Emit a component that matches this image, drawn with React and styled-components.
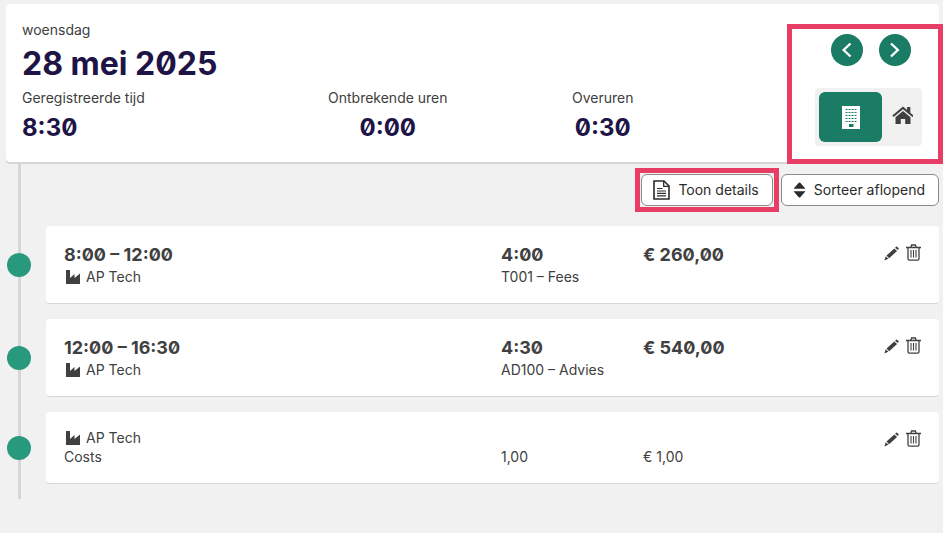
import { useState } from "react";
import styled, { createGlobalStyle, css } from "styled-components";

const GlobalStyle = createGlobalStyle`
  * {
    box-sizing: border-box;
  }

  body {
    margin: 0;
    background: #f1f1f1;
    color: #404040;
    font-family: Inter, "Liberation Sans", sans-serif;
    font-size: 14px;
    line-height: 20px;
  }

  button {
    font: inherit;
    color: inherit;
    cursor: pointer;
  }
`;

const Page = styled.div`
  padding: 4px 4px 32px 6px;
`;

const highlight = css`
  position: relative;

  &::after {
    content: "";
    position: absolute;
    inset: ${(props) => props.$inset};
    border: 5px solid #e83e66;
    pointer-events: none;
  }
`;

const Header = styled.header`
  display: flex;
  padding: 16px 17px 14px 16px;
  background: #fff;
  border-radius: 4px;
  box-shadow: 0 2px 0 #d6d6d6;
`;

const Summary = styled.div`
  flex: 1;
`;

const Title = styled.h1`
  margin: 0;
  color: #1e1446;
  font-size: 32px;
  font-weight: 700;
  line-height: 48px;
  font-feature-settings: "zero";
`;

const Totals = styled.dl`
  display: grid;
  grid-template-columns: 306fr 244fr 243fr;
  margin: 0;
`;

const Total = styled.div`
  justify-self: start;
  text-align: ${(props) => (props.$center ? "center" : "left")};
`;

const Value = styled.dd`
  margin: 0;
  color: #1e1446;
  font-size: 24px;
  font-weight: 700;
  line-height: 40px;
  font-feature-settings: "zero";
`;

const Controls = styled.div`
  ${highlight}
  display: flex;
  flex-direction: column;
  align-items: center;
  gap: 22px;
  padding-top: 14px;
`;

const DayNav = styled.nav`
  display: flex;
  gap: 16px;
  padding-left: 5px;
`;

const RoundButton = styled.button`
  display: grid;
  place-items: center;
  width: 32px;
  height: 32px;
  padding: 0;
  border: 0;
  border-radius: 50%;
  background: #1a7c64;
  color: #fff;
`;

const Places = styled.div`
  display: flex;
  padding: 4px 0 4px 4px;
  border-radius: 4px;
  background: #f1f1f1;
`;

const PlaceButton = styled.button`
  display: grid;
  place-items: center;
  width: ${(props) => (props.$active ? 63 : 40)}px;
  height: 50px;
  padding: 0;
  border: 0;
  border-radius: 6px;
  background: ${(props) => (props.$active ? "#1a7c64" : "transparent")};
  color: ${(props) => (props.$active ? "#fff" : "#404040")};
`;

const Toolbar = styled.div`
  display: flex;
  justify-content: flex-end;
  gap: 8px;
  padding: 12px 0 20px;
`;

const Highlighted = styled.div`
  ${highlight}
`;

const ToolButton = styled.button`
  display: flex;
  align-items: center;
  gap: 8px;
  height: 32px;
  padding: 0 13px 0 11px;
  border: 1px solid #8a8a8a;
  border-radius: 6px;
  background: #fff;
  color: #2b2b2b;
`;

const Timeline = styled.main`
  padding-bottom: 15px;
  background: linear-gradient(#d6d6d6, #d6d6d6) 12px 0 / 3px 100% no-repeat;
`;

const Entries = styled.ul`
  display: flex;
  flex-direction: column;
  gap: 15px;
  margin: 0;
  padding: 0;
  list-style: none;
`;

const Entry = styled.li`
  display: flex;
  align-items: center;
  gap: 15px;
  padding-left: 1px;
`;

const Dot = styled.span`
  width: 24px;
  height: 24px;
  border-radius: 50%;
  background: #28997d;
`;

const Card = styled.article`
  flex: 1;
  display: grid;
  grid-template-columns: 437fr 142fr 241fr 37px;
  align-items: ${(props) => (props.$cost ? "end" : "start")};
  padding: ${(props) => (props.$cost ? "16px 18px 17px" : "16px 18px")};
  border-bottom: 1px solid #d6d6d6;
  border-radius: 4px;
  background: #fff;
`;

const Strong = styled.div`
  font-size: 18px;
  font-weight: 700;
  line-height: 25px;
  font-feature-settings: "zero";
`;

const Line = styled.div`
  display: flex;
  align-items: center;
  gap: 5px;
  line-height: ${(props) => (props.$tight ? 19 : 20)}px;
`;

const Actions = styled.div`
  display: flex;
  align-self: start;
  justify-content: space-between;
  padding-top: 2px;
`;

const IconButton = styled.button`
  display: flex;
  align-items: flex-start;
  padding: 0;
  border: 0;
  background: none;
`;

const Chevron = ({ next }) => (
  <svg width="16" height="16" viewBox="0 0 16 16" fill="none" stroke="currentColor" strokeWidth="2.4">
    <path d={next ? "M4 1.5L10.8 8L4 14.5" : "M11.5 1.5L4.7 8L11.5 14.5"} />
  </svg>
);

const OfficeIcon = () => (
  <svg width="18" height="23" viewBox="0 0 18 23">
    <path d="M0 0h18v23H0z" fill="currentColor" />
    <g fill="#1a7c64">
      {[4, 7, 10, 13, 16].map((y) =>
        [3.5, 6.5, 9.5, 12.5].map((x) => <rect key={`${x}-${y}`} x={x} y={y - 1} width="2" height="1" />)
      )}
      <path d="M7 18h4.5v3H7z" />
    </g>
  </svg>
);

const HomeIcon = () => (
  <svg width="22" height="22" viewBox="-1 0 22 22" fill="currentColor">
    <path d="M11 .5L.3 9.6l1.3 1.5L11 3.3l9.4 7.8 1.3-1.5-3.4-2.9V1h-3.2v3z" />
    <path d="M11 5L3.5 11.2V18h5.3v-5h4.4v5h5.3v-6.8z" />
  </svg>
);

const DocumentIcon = () => (
  <svg width="17" height="20" viewBox="0 0 17 20" fill="none" stroke="currentColor" strokeWidth="1.6">
    <path d="M1 1h10l5 5v13H1z" />
    <path d="M10.7 1v5.3H16" strokeWidth="1.3" />
    <path d="M4 8.5h5.5M4 11h9M4 13.4h9M4 15.8h9" strokeWidth="1.2" />
  </svg>
);

const SortIcon = () => (
  <svg width="13" height="16" viewBox="0 0 13 16" fill="currentColor">
    <path d="M.5 6.8L5.5 1q1-1 2 0l5 5.8zM.5 9.2h12l-5 5.8q-1 1-2 0z" />
  </svg>
);

const FactoryIcon = () => (
  <svg width="17" height="14" viewBox="0 0 17 14" fill="currentColor">
    <path d="M2 0h4v8l4.5-4v4L16 3.5V14H2z" />
  </svg>
);

const PencilIcon = () => (
  <svg width="15" height="20" viewBox="0 1 15 20" fill="currentColor">
    <path d="M10.3 5.4l2.8 2.7-8 7.1-2.6-2.6zM11.1 4.7l1-.9q.7-.5 1.3.1l1.1 1.2q.5.7-.1 1.2l-.6.6zM1.8 13.2l2.6 2.6L.3 17.5z" />
  </svg>
);

const TrashIcon = () => (
  <svg width="15" height="17" viewBox="0 0 15 17" fill="none" stroke="currentColor" strokeWidth="1.3">
    <path d="M0 3.5h15M4.8 3.3L5.6 1h3.8l.8 2.3M2 3.7v11.1q0 1.4 1.4 1.4h8.2q1.4 0 1.4-1.4V3.7" />
    <path d="M5 6v7.5M7.5 6v7.5M10 6v7.5" strokeWidth="1.1" />
  </svg>
);

const totals = [
  { label: "Geregistreerde tijd", value: "8:30" },
  { label: "Ontbrekende uren", value: "0:00" },
  { label: "Overuren", value: "0:30" },
];

const entries = [
  { time: "8:00 – 12:00", client: "AP Tech", amount: "4:00", task: "T001 – Fees", price: "€ 260,00" },
  { time: "12:00 – 16:30", client: "AP Tech", amount: "4:30", task: "AD100 – Advies", price: "€ 540,00" },
  { client: "AP Tech", kind: "Costs", amount: "1,00", price: "€ 1,00" },
];

const EntryRow = ({ entry }) => {
  const cost = !entry.time;
  const Amount = cost ? Line : Strong;

  return (
    <Entry>
      <Dot />
      <Card $cost={cost}>
        <div>
          {!cost && <Strong>{entry.time}</Strong>}
          <Line $tight={cost}>
            <FactoryIcon />
            {entry.client}
          </Line>
          {cost && <Line $tight>{entry.kind}</Line>}
        </div>
        <div>
          <Amount $tight={cost}>{entry.amount}</Amount>
          {entry.task && <Line>{entry.task}</Line>}
        </div>
        <Amount $tight={cost}>{entry.price}</Amount>
        <Actions>
          <IconButton aria-label="Bewerken">
            <PencilIcon />
          </IconButton>
          <IconButton aria-label="Verwijderen">
            <TrashIcon />
          </IconButton>
        </Actions>
      </Card>
    </Entry>
  );
};

const App = () => {
  const [place, setPlace] = useState("office");

  return (
    <>
      <GlobalStyle />
      <Page>
        <Header>
          <Summary>
            <div>woensdag</div>
            <Title>28 mei 2025</Title>
            <Totals>
              {totals.map((total, i) => (
                <Total key={total.label} $center={i > 0}>
                  <dt>{total.label}</dt>
                  <Value>{total.value}</Value>
                </Total>
              ))}
            </Totals>
          </Summary>
          <Controls $inset="4px -21px -16px -28px">
            <DayNav>
              <RoundButton aria-label="Vorige dag">
                <Chevron />
              </RoundButton>
              <RoundButton aria-label="Volgende dag">
                <Chevron next />
              </RoundButton>
            </DayNav>
            <Places>
              <PlaceButton aria-label="Kantoor" $active={place === "office"} onClick={() => setPlace("office")}>
                <OfficeIcon />
              </PlaceButton>
              <PlaceButton aria-label="Thuis" $active={place === "home"} onClick={() => setPlace("home")}>
                <HomeIcon />
              </PlaceButton>
            </Places>
          </Controls>
        </Header>

        <Timeline>
          <Toolbar>
            <Highlighted $inset="-6px">
              <ToolButton>
                <DocumentIcon />
                Toon details
              </ToolButton>
            </Highlighted>
            <ToolButton>
              <SortIcon />
              Sorteer aflopend
            </ToolButton>
          </Toolbar>
          <Entries>
            {entries.map((entry, i) => (
              <EntryRow key={i} entry={entry} />
            ))}
          </Entries>
        </Timeline>
      </Page>
    </>
  );
};

export default App;
